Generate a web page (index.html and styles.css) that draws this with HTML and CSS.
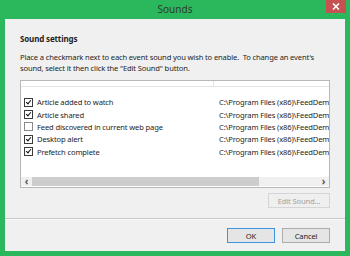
FILE: index.html
```html
<!DOCTYPE html>
<html lang="en">
<head>
    <meta charset="UTF-8">
    <title>Sounds</title>
    <link rel="stylesheet" href="styles.css">
</head>
<body>
    <div class="window">
        <div class="titlebar">
            <span class="title">Sounds</span>
            <span class="close">
                <svg width="8" height="7" viewBox="0 0 8 7"><path d="M1 0.5L7 6.5M7 0.5L1 6.5" stroke="#fff" stroke-width="1.6"/></svg>
            </span>
        </div>

        <div class="content">
            <div class="main">
                <h1>Sound settings</h1>
                <p class="intro">Place a checkmark next to each event sound you wish to enable.&nbsp; To change an event's sound, select it then click the "Edit Sound" button.</p>

                <div class="listbox">
                    <div class="list-head">
                        <span class="col-name"></span>
                        <span class="col-path"></span>
                    </div>
                    <div class="rows">
                        <div class="row"><span class="col-name"><span class="check on"></span>Article added to watch</span><span class="col-path">C:\Program Files (x86)\FeedDem</span></div>
                        <div class="row"><span class="col-name"><span class="check on"></span>Article shared</span><span class="col-path">C:\Program Files (x86)\FeedDem</span></div>
                        <div class="row"><span class="col-name"><span class="check"></span>Feed discovered in current web page</span><span class="col-path">C:\Program Files (x86)\FeedDem</span></div>
                        <div class="row"><span class="col-name"><span class="check on"></span>Desktop alert</span><span class="col-path">C:\Program Files (x86)\FeedDem</span></div>
                        <div class="row"><span class="col-name"><span class="check on"></span>Prefetch complete</span><span class="col-path">C:\Program Files (x86)\FeedDem</span></div>
                    </div>
                    <div class="hscroll">
                        <span class="arrow">&#8249;</span>
                        <span class="thumb"></span>
                        <span class="track"></span>
                        <span class="arrow">&#8250;</span>
                    </div>
                </div>

                <div class="edit-row">
                    <button class="btn" disabled>Edit Sound...</button>
                </div>
            </div>

            <div class="footer">
                <button class="btn default">OK</button>
                <button class="btn">Cancel</button>
            </div>
        </div>
    </div>
</body>
</html>
```

FILE: styles.css
```css
/* window frame */
body {
    margin: 0;
    font-family: 'Noto Sans', 'Open Sans', sans-serif;
    font-size: 7.6px;
    letter-spacing: -0.15px;
    color: #1e1e1e;
}

.window {
    width: 350px;
    height: 256px;
    background-color: #2bb75b;
    padding: 0 5px 5px 5px;
    box-sizing: border-box;
    display: flex;
    flex-direction: column;
}

.titlebar {
    height: 19px;
    flex-shrink: 0;
    display: flex;
    justify-content: center;
    align-items: center;
    position: relative;
}

.title {
    font-size: 10px;
    letter-spacing: 0;
    color: #2d3b30;
    margin-top: -1px;
}

.close {
    position: absolute;
    right: -1px;
    top: 0;
    width: 20px;
    height: 13px;
    background-color: #c75050;
    display: flex;
    justify-content: center;
    align-items: center;
}

.content {
    flex: 1;
    background-color: #f0f0f0;
    display: flex;
    flex-direction: column;
}

.main {
    padding: 14px 15px 0 15px;
    border-bottom: 1px solid #c9c9c9;
    height: 185px;
}

h1 {
    font-size: 8px;
    font-weight: bold;
    margin: 0;
    line-height: 11px;
}

.intro {
    margin: 8px 0 0 0;
    line-height: 10.5px;
    width: 315px;
}

/* list */
.listbox {
    margin-top: 7px;
    width: 308px;
    height: 106px;
    border: 1px solid #b8b8b8;
    background-color: white;
    overflow: hidden;
    display: flex;
    flex-direction: column;
}

.list-head {
    display: flex;
    height: 5px;
    border-bottom: 1px solid #e3e3e3;
    flex-shrink: 0;
}

.list-head .col-name {
    border-right: 1px solid #e3e3e3;
    width: 193px;
}

.rows {
    flex: 1;
    padding-top: 9px;
}

.row {
    display: flex;
    height: 12.4px;
    align-items: center;
    white-space: nowrap;
}

.col-name {
    width: 194px;
    flex-shrink: 0;
    display: flex;
    align-items: center;
    padding-left: 3px;
    box-sizing: border-box;
}

.col-path {
    padding-left: 4px;
}

.check {
    width: 7px;
    height: 7px;
    border: 1px solid #8a8a8a;
    background-color: white;
    margin-right: 4px;
    position: relative;
}

.check.on {
    border-color: #3a3a3a;
}

.check.on::after {
    content: "";
    position: absolute;
    left: 2px;
    top: 0;
    width: 2px;
    height: 4px;
    border: solid #111;
    border-width: 0 1.5px 1.5px 0;
    transform: rotate(40deg);
}

.hscroll {
    height: 9px;
    display: flex;
    flex-shrink: 0;
    background-color: #f0f0f0;
    margin-bottom: 1px;
}

.hscroll .arrow {
    width: 11px;
    font-size: 10px;
    line-height: 8px;
    text-align: center;
    color: #555;
    font-weight: bold;
}

.hscroll .thumb {
    width: 227px;
    background-color: #cdcdcd;
}

.hscroll .track {
    flex: 1;
}

/* buttons */
.edit-row {
    display: flex;
    justify-content: flex-end;
    width: 310px;
    margin-top: 5px;
}

.btn {
    font-family: inherit;
    font-size: 7.6px;
    letter-spacing: -0.15px;
    height: 15px;
    padding: 0;
    border: 1px solid #acacac;
    background-color: #e5e5e5;
    color: #1e1e1e;
    width: 48px;
}

.btn:disabled {
    width: 62px;
    color: #a0a0a0;
    border-color: #d5d5d5;
    background-color: #efefef;
}

.btn.default {
    border-color: #3c94e0;
}

.footer {
    display: flex;
    justify-content: flex-end;
    gap: 7px;
    padding: 8px 15px 0 0;
    border-top: 1px solid #fafafa;
}
```
